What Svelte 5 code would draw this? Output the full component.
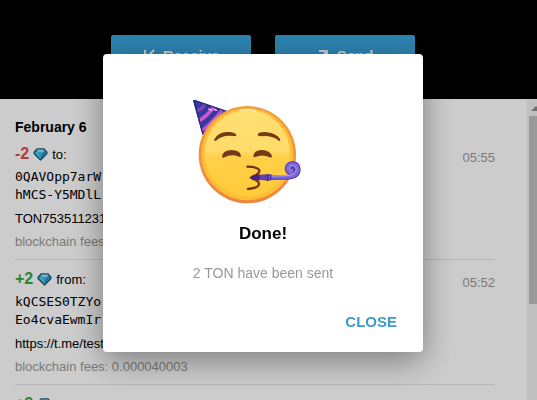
<script lang="ts">
  type Transaction = {
    amount: number;
    address: string[];
    comment: string;
    fees: string;
    time: string;
  };

  const transactions: Transaction[] = [
    {
      amount: -2,
      address: ["0QAVOpp7arW", "hMCS-Y5MDlL"],
      comment: "TON753511231",
      fees: "0.000040003",
      time: "05:55",
    },
    {
      amount: 2,
      address: ["kQCSES0TZYo", "Eo4cvaEwmIr"],
      comment: "https://t.me/test",
      fees: "0.000040003",
      time: "05:52",
    },
    {
      amount: 2,
      address: ["kQCSES0TZYo", "Eo4cvaEwmIr"],
      comment: "https://t.me/test",
      fees: "0.000040003",
      time: "05:50",
    },
  ];

  let open = $state(true);
</script>

<div class="wallet">
  <header>
    <button class="action" type="button">
      <svg width="12" height="12" viewBox="0 0 12 12">
        <path d="M11 1 L2 10 M2 1 V10 H10" />
      </svg>
      Receive
    </button>
    <button class="action" type="button">
      <svg width="12" height="12" viewBox="0 0 12 12">
        <path d="M1 11 L10 2 M2 2 H10 V10" />
      </svg>
      Send
    </button>
  </header>

  <div class="body">
    <main>
      <h2>February 6</h2>
      {#each transactions as tx}
        <article>
          <div class="info">
            <div class="head">
              <span class="amount" class:in={tx.amount > 0}>
                {tx.amount > 0 ? "+" : ""}{tx.amount}
              </span>
              <svg class="gem" width="15" height="14" viewBox="0 0 30 28" aria-hidden="true">
                <path d="M8 4 H22 L28 11 L27 14 L15 26 L3 14 L2 11 Z" fill="#37aee0" stroke="#1d5674" stroke-width="2.6" stroke-linejoin="round" />
                <path d="M8 5 H22 L20 11 H10 Z" fill="#8be4fa" />
                <path d="M4 11 H10 L15 24 Z" fill="#5fd0f2" />
                <path d="M10 11 H20 L15 24 Z" fill="#39b2e4" />
                <path d="M20 11 H26 L15 24 Z" fill="#2284bb" />
              </svg>
              <span>{tx.amount > 0 ? "from:" : "to:"}</span>
            </div>
            <div class="address">
              {#each tx.address as part}
                <div>{part}</div>
              {/each}
            </div>
            <p>{tx.comment}</p>
            <p class="muted">blockchain fees: {tx.fees}</p>
          </div>
          <time class="muted">{tx.time}</time>
        </article>
      {/each}
    </main>
    <div class="scrollbar" aria-hidden="true">
      <div class="up"></div>
      <div class="thumb"></div>
    </div>
  </div>
</div>

{#if open}
  <div class="overlay">
    <div class="popup" role="dialog" aria-modal="true" aria-labelledby="done-title">
      <svg class="party" width="150" height="120" viewBox="24 12 450 360" aria-hidden="true">
        <defs>
          <linearGradient id="face" x1="0" y1="0" x2="0" y2="1">
            <stop offset="0" stop-color="#ffdf72" />
            <stop offset="0.46" stop-color="#ffdc6a" />
            <stop offset="0.54" stop-color="#ffd04a" />
            <stop offset="1" stop-color="#ffcb38" />
          </linearGradient>
          <linearGradient id="rim" x1="0" y1="0" x2="0" y2="1">
            <stop offset="0" stop-color="#f3a040" />
            <stop offset="1" stop-color="#ec8640" />
          </linearGradient>
          <clipPath id="hat">
            <path d="M39 31 Q40 28 45 30 L150 66 L72 142 Q67 134 64 122 Z" />
          </clipPath>
        </defs>
        <g clip-path="url(#hat)">
          <rect x="36" y="24" width="120" height="124" fill="#343a9f" />
          <path d="M46 62 Q66 62 78 36" fill="none" stroke="#8a3fbc" stroke-width="9" />
          <path d="M54 94 Q84 78 108 42" fill="none" stroke="#d455d2" stroke-width="11" />
          <path d="M62 124 Q96 100 134 50" fill="none" stroke="#b84fd2" stroke-width="10" />
          <path d="M41 31 L64 122 L72 142" fill="none" stroke="#272a80" stroke-width="7" />
          <path d="M43 30 L150 66" fill="none" stroke="#292d87" stroke-width="6" />
          <path d="M86 57 L94 60 M103 58 L109 61" stroke="#e9dcff" stroke-width="4" stroke-linecap="round" />
        </g>
        <circle cx="202" cy="194" r="146" fill="url(#rim)" />
        <circle cx="202" cy="193" r="138" fill="#ffbd38" />
        <ellipse cx="202" cy="190" rx="128" ry="130" fill="url(#face)" />
        <path d="M183 61 Q202 56 225 63" fill="none" stroke="#fff4bf" stroke-width="4" stroke-linecap="round" />
        <g fill="#753b17">
          <path d="M102 149 Q115 124 146 126 Q163 127 169 134 Q169 140 161 138 Q128 133 108 152 Q103 154 102 149 Z" />
          <path d="M233 133 Q237 126 255 126 Q289 128 301 149 Q301 155 296 152 Q276 135 241 139 Q233 139 233 133 Z" />
          <path d="M126 198 Q130 180 155 180 Q180 181 183 197 Q183 202 177 200 Q153 191 134 202 Q126 205 126 198 Z" />
          <path d="M220 197 Q223 180 246 180 Q270 182 276 198 Q276 204 269 202 Q247 191 227 201 Q220 203 220 197 Z" />
        </g>
        <path d="M202 230 Q238 231 238 243 Q238 252 219 259 Q211 263 219 267 Q237 273 237 282 Q236 294 204 297" fill="none" stroke="#713216" stroke-width="7" stroke-linecap="round" stroke-linejoin="round" />
        <path d="M207 263 Q225 251 244 254 L268 253 V272 L244 270 Q223 273 207 263 Z" fill="#452481" />
        <path d="M239 255 L270 254 V271 L239 269 Z" fill="#6242b6" />
        <path d="M269 263 L318 262 Q354 262 355 239 Q354 221 337 221 Q320 222 321 238 Q324 249 336 248 Q345 246 343 237 Q340 230 334 236" fill="none" stroke="#5640b0" stroke-width="14" stroke-linecap="round" />
        <path d="M270 262 L318 261 Q352 261 354 239 Q353 222 337 222 Q321 223 322 238 Q325 248 336 247" fill="none" stroke="#7e68e0" stroke-width="9" stroke-linecap="round" />
        <path d="M273 258 L318 257 Q345 256 349 239 Q348 227 337 226 Q327 227 328 238 Q331 243 338 240" fill="none" stroke="#b9aaf6" stroke-width="3" stroke-linecap="round" />
        <path d="M263 252 V273 M272 253 V271" stroke="#432c93" stroke-width="4" />
        <circle cx="269" cy="352" r="2" fill="#f4c08e" />
      </svg>
      <h1 id="done-title">Done!</h1>
      <p class="sent">2 TON have been sent</p>
      <button class="close" type="button" onclick={() => (open = false)}>CLOSE</button>
    </div>
  </div>
{/if}

<style>
  :global(body) {
    font-family: "Liberation Sans", Arial, sans-serif;
    font-size: 13px;
    line-height: 18px;
    color: #000;
    overflow: hidden;
  }
  h1, h2, p { margin: 0; }
  button { font-family: inherit; border: 0; cursor: pointer; }

  .wallet {
    display: flex;
    flex-direction: column;
    height: 100vh;
    overflow: hidden;
  }
  header {
    display: flex;
    justify-content: center;
    gap: 24px;
    padding: 35px 11px 24px 0;
    background: #000;
  }
  .action {
    display: flex;
    align-items: center;
    justify-content: center;
    gap: 8px;
    width: 140px;
    height: 40px;
    padding: 0;
    border-radius: 2px;
    background: #39a4dc;
    color: #fff;
    font-size: 15px;
    font-weight: 700;
  }
  .action path { fill: none; stroke: #fff; stroke-width: 2; }

  .body {
    display: flex;
    flex: 1;
    min-height: 0;
    background: #fff;
  }
  main {
    flex: 1;
    padding: 20px 32px 0 15px;
    overflow: hidden;
  }
  h2 { font-size: 14px; line-height: 16px; }
  article {
    display: flex;
    justify-content: space-between;
    padding: 9px 0 8px;
    border-bottom: 1px solid #e6e6e6;
  }
  .info { display: flex; flex-direction: column; gap: 5px; }
  .head {
    display: flex;
    align-items: baseline;
    gap: 4px;
    height: 19px;
    line-height: 20px;
  }
  .amount { font-size: 16px; font-weight: 700; color: #e0474f; }
  .amount.in { color: #37a63a; }
  .gem { align-self: center; }
  .address { margin-bottom: 1px; font-family: "DejaVu Sans Mono", monospace; }
  .muted { color: #999; }
  time { padding-top: 5px; }

  .scrollbar { width: 10px; background: #f1f1f1; overflow: hidden; }
  .up {
    width: 0;
    margin: 7px 0 5px 4px;
    border: 5px solid transparent;
    border-top: 0;
    border-bottom-color: #8a8a8a;
  }
  .thumb { height: 188px; margin-left: 2px; background: #c1c1c1; }

  .overlay {
    position: fixed;
    inset: 0;
    display: flex;
    align-items: flex-start;
    justify-content: center;
    padding: 54px 11px 0 0;
    background: rgba(0, 0, 0, 0.2);
  }
  .popup {
    display: flex;
    flex-direction: column;
    align-items: center;
    box-sizing: border-box;
    width: 100%;
    max-width: 320px;
    padding: 40px 16px 13px;
    border-radius: 4px;
    background: #fff;
    box-shadow: 0 8px 32px rgba(0, 0, 0, 0.4);
  }
  h1 { margin-top: 10px; font-size: 17px; line-height: 20px; }
  .sent {
    margin: 19px 0 20px;
    font-size: 14px;
    line-height: 20px;
    color: #999;
  }
  .close {
    align-self: flex-end;
    height: 36px;
    padding: 0 10px;
    background: transparent;
    color: #3d9bc9;
    font-size: 15px;
    font-weight: 700;
  }
</style>
